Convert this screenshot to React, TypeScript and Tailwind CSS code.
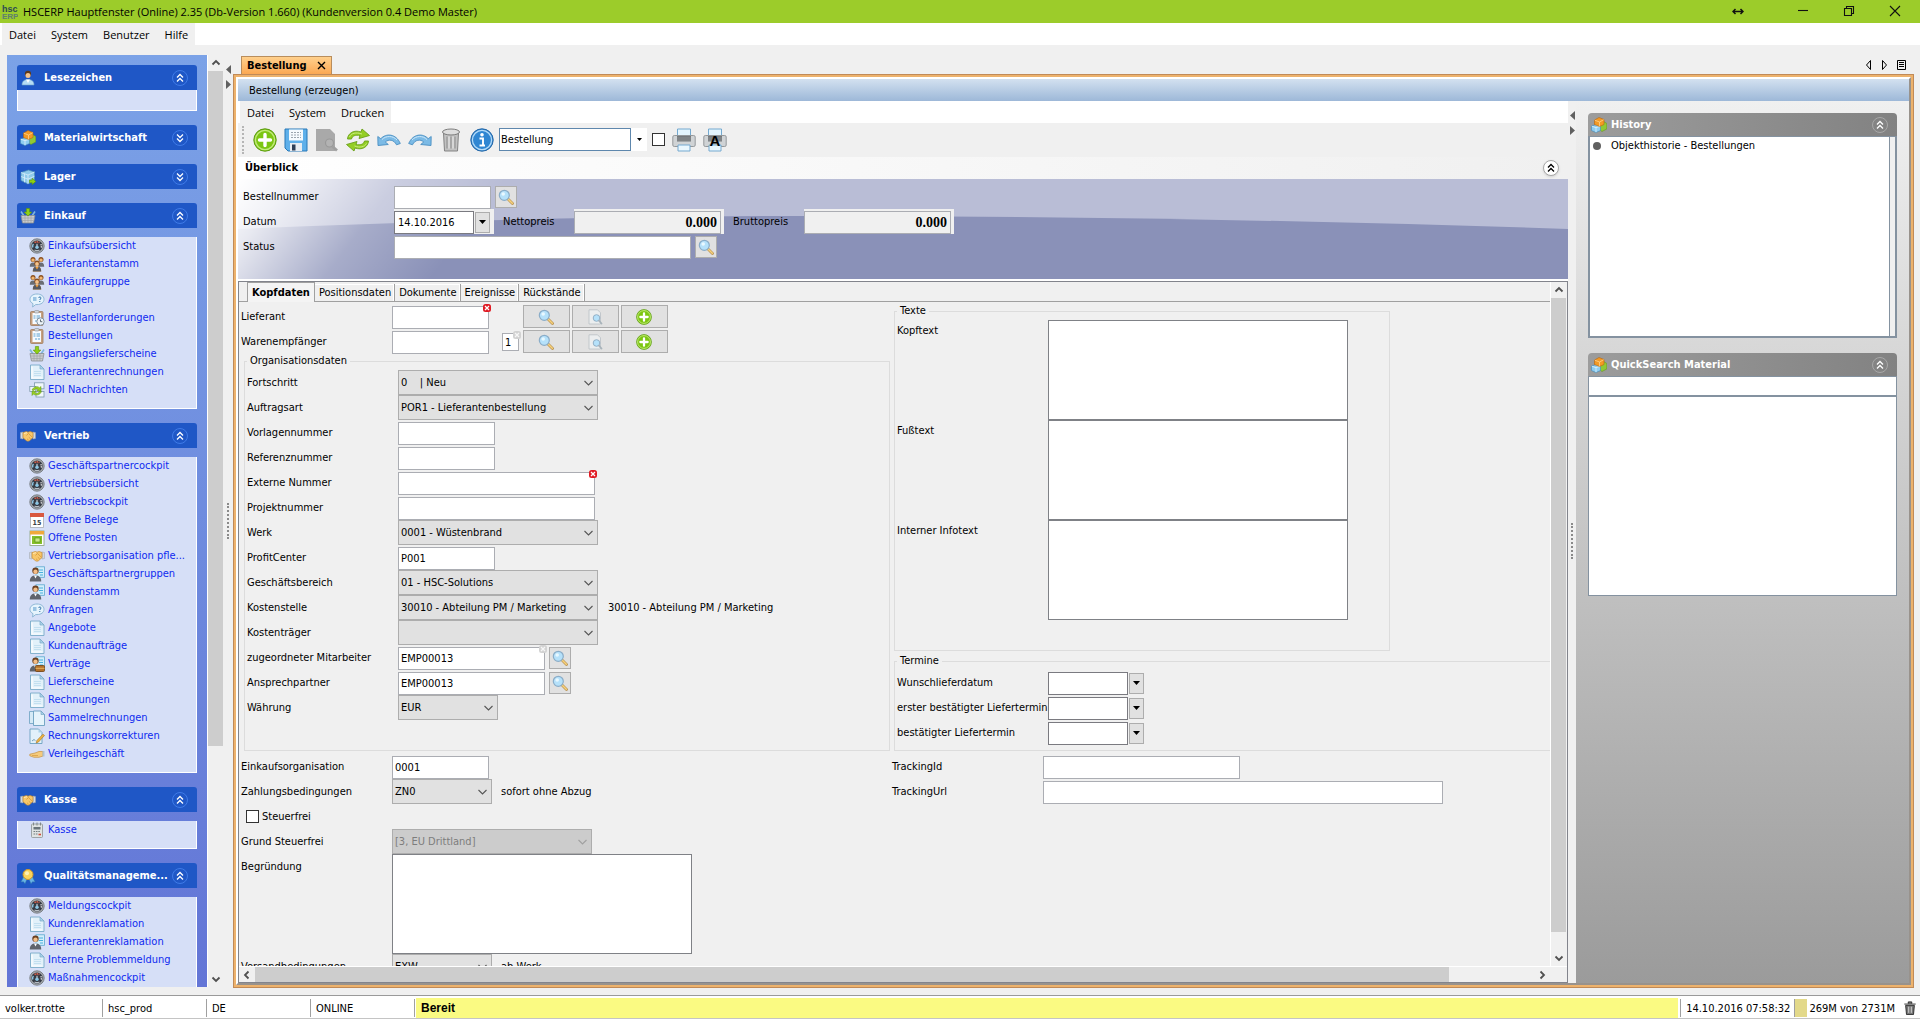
import React from "react";

/* ---------- small drawings ---------- */

type IconProps = { size?: number };

const Svg = ({ size = 16, children, box = 16 }: { size?: number; box?: number; children: React.ReactNode }) => (
  <svg width={size} height={size} viewBox={`0 0 ${box} ${box}`} className="block shrink-0" aria-hidden="true">
    {children}
  </svg>
);

const Gauge = () => (
  <Svg>
    <circle cx="8" cy="8" r="7.2" fill="#a4a8ad" stroke="#74797f" strokeWidth="0.9" />
    <circle cx="8" cy="8" r="5.6" fill="#363b44" />
    <path d="M3.8 9.500a4.200 4.200 0 0 1 .6-3.600" stroke="#8fc4e2" strokeWidth="1.400" fill="none" />
    <path d="M5.600 4.700a4 4 0 0 1 4.800 0" stroke="#e0604a" strokeWidth="1.600" fill="none" strokeDasharray="1.400 0.700" />
    <path d="M12.200 9.500a4.200 4.200 0 0 0-.6-3.600" stroke="#f2f2f2" strokeWidth="1.400" fill="none" strokeDasharray="1.200 0.800" />
    <path d="M5.500 12a5 5 0 0 0 5 0" stroke="#b9bfc6" strokeWidth="1.200" fill="none" />
    <path d="M8 9.500V5.800" stroke="#fff" strokeWidth="0.900" />
    <circle cx="8" cy="9.300" r="1.700" fill="#8cc6e4" />
  </Svg>
);

const People = () => (
  <Svg>
    <circle cx="4" cy="3.400" r="2.500" fill="#8a4f20" />
    <circle cx="12" cy="3.400" r="2.500" fill="#8a4f20" />
    <circle cx="4" cy="4.100" r="1.700" fill="#f3b870" />
    <circle cx="12" cy="4.100" r="1.700" fill="#f3b870" />
    <path d="M.8 10.800c0-3 1.200-4.300 3.200-4.300s3 1.300 3 4.300zM9 10.800c0-3 1-4.300 3-4.300s3.200 1.300 3.200 4.300z" fill="#6a6d74" />
    <circle cx="8" cy="7.200" r="2.700" fill="#8a4f20" />
    <circle cx="8" cy="8" r="1.900" fill="#f5c48c" />
    <path d="M3.800 15.500c0-3.600 1.600-5 4.200-5s4.200 1.400 4.200 5z" fill="#ec9a38" />
    <path d="M3.800 15.500c0-2.600 1-4.200 2.400-4.700L8 13.500l1.800-2.700c1.400.5 2.400 2.100 2.400 4.700z" fill="#555962" />
  </Svg>
);

const Speech = () => (
  <Svg>
    <path d="M8 2C3.900 2 1 4.200 1 7.300c0 2 1.200 3.500 3 4.400L3.600 15l3.200-2.500c.4 0 .8.1 1.200.1 4.100 0 7-2.200 7-5.300S12.100 2 8 2z" fill="#e6f4fd" stroke="#8fb8d6" />
    <path d="M4 6h3.500M4 8h3.500" stroke="#4c93c8" />
    <path d="M9.600 6c.2-1.400 2.600-1.200 2.400.1-.1.800-1.200.9-1.200 1.900M10.800 9v1" stroke="#2a6ea6" fill="none" />
  </Svg>
);

const Clipboard = ({ clock = false }: { clock?: boolean }) => (
  <Svg>
    <rect x="1.500" y="1.500" width="12.500" height="14" rx="1" fill="#c69f7e" stroke="#a07d60" strokeWidth=".8" />
    <rect x="3.500" y="3" width="8.500" height="11" fill="#f7fbff" />
    <rect x="5.500" y=".5" width="4.500" height="2.500" rx="1" fill="#d3d6da" stroke="#8b9096" strokeWidth=".6" />
    <path d="M4.500 6h2M7.500 6h3.500M4.500 8h2M7.500 8h3.500M6 11h2.200M9 11h2" stroke="#5aa0cf" />
    {clock && (
      <>
        <circle cx="11.500" cy="11.500" r="3.700" fill="#eef4f8" stroke="#8293a1" />
        <path d="M11.500 9.500v2.200h1.800" stroke="#4b5a66" fill="none" strokeWidth=".9" />
      </>
    )}
  </Svg>
);

const Basket = () => (
  <Svg>
    <path d="M1 3.500 4 8M15 3.500 12 8" stroke="#7fb6dc" strokeWidth="1.600" />
    <path d="M1 7.500h14l-1.500 7.500h-11z" fill="#c9cbcd" stroke="#8a8d91" strokeWidth=".8" />
    <path d="M2 10h12M2.500 12.500h11M5 8v7M8 8v7M11 8v7" stroke="#9c9fa3" strokeWidth=".6" />
    <path d="M6.400.5h3.200v3.600h2.200L8 8 4.200 4.100h2.200z" fill="#8fd016" stroke="#5e9409" strokeWidth=".6" />
  </Svg>
);

const Doc = () => (
  <Svg>
    <path d="M1.500 1h9.500l4 4v10.500h-13.500z" fill="#e2f1fa" stroke="#7aabc8" strokeWidth=".9" />
    <path d="M3 2.500v11.500h10.500" stroke="#fff" strokeWidth="1.200" fill="none" />
    <path d="M11 1v4h4z" fill="#a9d2e8" stroke="#7aabc8" strokeWidth=".7" />
    <path d="M5 7.500h7M5 9.500h7M5 11.500h7" stroke="#c3e0f0" />
  </Svg>
);

const Docs = () => (
  <Svg>
    <path d="M.5 1.500h9v12h-9z" fill="#d5eaf6" stroke="#6ba0c0" strokeWidth=".8" />
    <path d="M4.500 1h7.500l3.500 3.500v11h-11z" fill="#e6f4fb" stroke="#6ba0c0" strokeWidth=".9" />
    <path d="M12 1v3.500h3.500z" fill="#a9d2e8" stroke="#6ba0c0" strokeWidth=".6" />
  </Svg>
);

const DocEdit = () => (
  <Svg>
    <path d="M1 1h8.500l3.500 3.500v11h-12z" fill="#e2f1fa" stroke="#6ba0c0" strokeWidth=".9" />
    <path d="M9.500 1v3.500h3.500z" fill="#a9d2e8" />
    <path d="m15.500 7.500-6 6.500-2.300 1 .7-2.500 6-6.300z" fill="#eeb53f" stroke="#a5702a" strokeWidth=".6" />
    <path d="m3 13 2-1.500 1.500 1.200" stroke="#5b88a5" fill="none" strokeWidth=".8" />
  </Svg>
);

const Edi = () => (
  <Svg>
    <rect x="5.500" y=".8" width="9.500" height="6" fill="#f1f7fb" stroke="#7c98ad" strokeWidth=".8" />
    <rect x=".8" y="4.500" width="6" height="5" fill="#f1f7fb" stroke="#7c98ad" strokeWidth=".8" />
    <rect x="7" y="9.500" width="8" height="5.500" fill="#f1f7fb" stroke="#7c98ad" strokeWidth=".8" />
    <path d="M3 8c2-4 6-4 7.500-2.200L12 4.500V9H7.800l1.300-1.500C7.800 6.500 5.500 6.800 4.500 8.500zM12.500 9.500c-1.500 4-6 4.300-8 2.500L3 13.500V9.200h4l-1.200 1.500c1.500 1 3.700.7 4.700-1.200z" fill="#9bd024" stroke="#5d9410" strokeWidth=".5" />
  </Svg>
);

const CalendarRed = () => (
  <Svg>
    <rect x="1.500" y="1.500" width="13" height="14" fill="#fff" stroke="#a9adb3" strokeWidth=".8" />
    <rect x="1" y="1" width="14" height="4" fill="#d9583f" />
    <text x="8" y="12.500" textAnchor="middle" fontSize="7" fontWeight="700" fontFamily="DejaVu Sans Condensed" fill="#3a3f45">15</text>
  </Svg>
);

const CalendarGreen = () => (
  <Svg>
    <rect x="1" y="1" width="14" height="14.500" fill="#fff" stroke="#8aa17c" strokeWidth=".8" />
    <rect x="1" y="1" width="14" height="3.500" fill="#f0a93c" />
    <rect x="3" y="6" width="10" height="8" fill="#86bf2a" />
    <rect x="6" y="8" width="5" height="4" fill="#c8ea86" stroke="#4f8410" strokeWidth=".6" />
  </Svg>
);

const Handshake = () => (
  <Svg>
    <path d="M.5 4.500 3 4v7l-2.500-.5zM15.500 4.500 13 4v7l2.500-.5z" fill="#d3d8de" stroke="#9aa0a8" strokeWidth=".5" />
    <path d="M3 4.500 6.500 3.500 8 4.200l2-.7 3 1v5l-3.500 3.200c-1 .6-2 .6-3 0L3 9.800z" fill="#f8c76a" stroke="#c48a30" strokeWidth=".7" />
    <path d="M6.500 7.500 8.500 5.500l3.800 3.700M7 10.800l1.600 1.200M8.800 9.300l1.900 1.500" stroke="#cf9038" strokeWidth=".7" fill="none" />
    <path d="M4 5.500 7 4.700" stroke="#ffe8b5" />
  </Svg>
);

const PersonCard = ({ briefcase = false }: { briefcase?: boolean }) => (
  <Svg>
    <rect x="7" y=".8" width="8.500" height="10.500" fill="#d3eefb" stroke="#5ba7cf" strokeWidth=".8" />
    <path d="M10 4h4M10 6.500h4M11 9h3" stroke="#49b0dc" />
    <circle cx="6.500" cy="4.700" r="3.200" fill="#6b4020" />
    <circle cx="6.500" cy="5.800" r="2.200" fill="#f3bd86" />
    <path d="M.8 15.500c0-4.200 2.200-6 5.700-6s5.700 1.800 5.700 6z" fill="#60646c" />
    <path d="m5 9.500 1.500 3 1.500-3z" fill="#fff" />
    {briefcase && <rect x="6.500" y="9.500" width="9" height="6" rx="1" fill="#b3702a" stroke="#6e3f10" strokeWidth=".8" />}
    {briefcase && <path d="M6.500 12.300h9" stroke="#e9b45c" />}
  </Svg>
);

const Hand = () => (
  <Svg>
    <path d="M.8 8.200 6 7l4-1.500h4v4.500l-4 1.300H5L.8 9.800z" fill="#f5cb7d" stroke="#c7923f" strokeWidth=".7" />
    <path d="M13.500 5h2v5.500h-2z" fill="#afc2d2" />
    <path d="M3 9.500h6" stroke="#cf9038" strokeWidth=".6" />
  </Svg>
);

const Calculator = () => (
  <Svg>
    <rect x="2.500" y="2" width="11" height="13.500" rx="1" fill="#dfe3e2" stroke="#8b9394" strokeWidth=".8" />
    <path d="M4.500.5v3M8 .5v3M11.500.5v3" stroke="#81898a" />
    <rect x="4.500" y="5" width="7" height="2.500" fill="#6a757b" />
    <path d="M4.500 9.500h7M4.500 12h4" stroke="#737c80" strokeDasharray="1.600 .8" />
    <path d="M9.500 12.500H12" stroke="#d34a3a" strokeWidth="1.600" />
  </Svg>
);

const UserIcon = () => (
  <Svg>
    <path d="M2 15c0-4 2.500-5.500 6-5.500s6 1.500 6 5.500z" fill="#b5dcf4" stroke="#6da3ca" strokeWidth=".6" />
    <path d="m6 9.500 2 3.500 2-3.500z" fill="#fff" />
    <circle cx="8" cy="3.900" r="3.100" fill="#5e3a1c" />
    <circle cx="8" cy="5.400" r="2.500" fill="#f4c48f" />
  </Svg>
);

const Cubes = () => (
  <Svg>
    <path d="m8.500 6.500 5-1.500 2.300 1.500v5.500L11 14.500l-3-2z" fill="#8fc936" stroke="#5e9312" strokeWidth=".5" />
    <path d="m.5 9 5-1.500L9.500 9v4.500L5 15.500.5 13.500z" fill="#8fcdf0" stroke="#3f88b9" strokeWidth=".6" />
    <path d="m.8 9.200 4.200 1.500 4.300-1.500M5 10.700v4.500" stroke="#dff2fc" strokeWidth=".8" fill="none" />
    <path d="m3.500 3 4.500-2.500 5 2v5L8.500 9.500l-5-2z" fill="#f39a25" stroke="#b8650d" strokeWidth=".6" />
    <path d="m3.800 3.200 4.700 1.800 4.200-2.300M8.500 5v4.300" stroke="#ffd28a" strokeWidth=".8" fill="none" />
  </Svg>
);

const Box = () => (
  <Svg>
    <path d="M1 3.500 8.500 1l6 2v8L8 15 1 11.500z" fill="#8fcbea" stroke="#4a8cb5" strokeWidth=".7" />
    <path d="m1 3.500 7 2.500 6.500-3M8 6v9M4.500 4.800v8.500M1 7.500l7 2.700 6.500-3" stroke="#e2f4fd" strokeWidth=".7" fill="none" />
    <path d="M9.500 11h2.700V9.200l3.600 3.200-3.600 3.200v-1.800H9.500z" fill="#8fd016" stroke="#5e9409" strokeWidth=".6" />
  </Svg>
);

const Medal = () => (
  <Svg>
    <path d="m3.500 9-2.500 5 2.500-.3 1.500 2 2-4.500zM12.500 9l2.500 5-2.500-.3-1.500 2-2-4.500z" fill="#69b3e4" stroke="#2f78ac" strokeWidth=".5" />
    <circle cx="8" cy="6.500" r="5" fill="#fbd35b" stroke="#d2982a" />
    <circle cx="7" cy="5.300" r="2" fill="#fff0b5" />
  </Svg>
);

const PlusGreen = ({ size = 16 }: IconProps) => (
  <Svg size={size} box={24}>
    <circle cx="12" cy="12" r="11.200" fill="#7cc611" stroke="#5c9a14" />
    <circle cx="12" cy="12" r="9.600" fill="none" stroke="#c2ea7c" strokeWidth="1.400" />
    <path d="M12 6.500v11M6.500 12h11" stroke="#fff" strokeWidth="3.400" strokeLinecap="round" />
  </Svg>
);

const Save = () => (
  <Svg size={24} box={24}>
    <path d="M1 1h22v22H4l-3-3z" fill="#5fb0ea" stroke="#2878b8" />
    <rect x="5" y="1.500" width="14" height="11" fill="#f5fafe" />
    <path d="M7 4.500h10M7 7h10M7 9.500h10" stroke="#9aa4ae" strokeDasharray="2 1" />
    <rect x="6" y="15" width="12" height="8" fill="#e8edf2" />
    <rect x="8" y="16.500" width="3.500" height="6" fill="#2d3f57" />
  </Svg>
);

const SearchDocGray = () => (
  <Svg size={24} box={24}>
    <path d="M1 1h14l5 5v17H1z" fill="#a9a9a9" />
    <circle cx="14.500" cy="15" r="4" fill="#b3b3b3" stroke="#999" strokeWidth="1.200" />
    <path d="m17.500 18.500 4.500 4" stroke="#9f9f9f" strokeWidth="2.800" />
  </Svg>
);

const Refresh = () => (
  <Svg size={24} box={24}>
    <path d="M1.500 11C2 5 8 1.500 15 4l1-3 7.500 6.500L13 10.500l1-3C9.500 6.500 6 8 5.500 11z" fill="#94ce24" stroke="#6aa01a" strokeWidth=".9" />
    <path d="M22.500 13c-.5 6-6.500 9.500-13.500 7l-1 3L.5 16.500 11 13.500l-1 3c4.500 1 8-.5 8.500-3.500z" fill="#94ce24" stroke="#6aa01a" strokeWidth=".9" />
    <path d="M3.500 9C5 5 10 4 16 6M20.500 15.500c-2 3.500-6.500 4.500-12 2.500" stroke="#c9ec83" fill="none" />
  </Svg>
);

const Undo = ({ flip = false }: { flip?: boolean }) => (
  <Svg size={24} box={24}>
    <g transform={flip ? "matrix(-1 0 0 1 24 0)" : undefined}>
      <path d="m.8 8.500 3 2.200C9 5 19 5.500 23.300 15.500l-3.800 1.300C17 11.500 11.500 11 8.300 14l3 2.500L1 17.500z" fill="#7cbbe6" stroke="#4a8fc2" strokeWidth=".9" />
      <path d="M5 11.500c4-4 11-4 15 .5" stroke="#cfe8f9" fill="none" />
    </g>
  </Svg>
);

const TrashIcon = () => (
  <Svg size={24} box={24}>
    <path d="M4.500 5h15l-1 18h-13z" fill="#c2c2c2" stroke="#838383" />
    <ellipse cx="12" cy="4" rx="8.500" ry="3" fill="#dedede" stroke="#7c7c7c" />
    <path d="M8 8.500v12M12 8.500v12M16 8.500v12" stroke="#989898" strokeWidth="1.300" />
    <path d="M10 8.500v12M14 8.500v12" stroke="#ececec" strokeWidth="1" />
  </Svg>
);

const Info = () => (
  <Svg size={24} box={24}>
    <circle cx="12" cy="12" r="11.200" fill="#2f86d2" stroke="#2767a5" />
    <circle cx="12" cy="12" r="9.600" fill="none" stroke="#b4dbf8" strokeWidth="1.300" />
    <circle cx="12" cy="6.800" r="1.800" fill="#fff" />
    <path d="M9.500 10.500h3.500v7M9.500 17.500h5.500" stroke="#fff" strokeWidth="1.900" fill="none" />
  </Svg>
);

const Printer = ({ letter = false }: { letter?: boolean }) => (
  <Svg size={24} box={24}>
    <path d="M5.500 1h13v8h-13z" fill="#e3f4fd" stroke="#74a9d0" />
    <rect x=".8" y="7.500" width="22.400" height="11" rx="1.500" fill="#d0d3d5" stroke="#94989b" />
    <path d="M5 8h14v5.500H5z" fill="#74787c" />
    <path d="M5 10h14M5 12h14" stroke="#95999c" strokeWidth=".7" />
    <path d="M6 17h12v6H6z" fill="#eaf7fe" stroke="#74a9d0" />
    {letter && <text x="12" y="18" textAnchor="middle" fontSize="15" fontWeight="700" fontFamily="Liberation Sans" fill="#000">A</text>}
  </Svg>
);

const Magnifier = () => (
  <Svg>
    <path d="m10 10 4.500 4.500" stroke="#b8914f" strokeWidth="2.800" strokeLinecap="round" />
    <path d="m10.300 10.300 4 4" stroke="#f7d27c" strokeWidth="1.600" strokeLinecap="round" />
    <circle cx="6.300" cy="6.300" r="5" fill="#b5e1fa" stroke="#8badc8" strokeWidth="1.200" />
    <circle cx="5.200" cy="5" r="1.800" fill="#e8f8ff" />
  </Svg>
);

const DocMagnifier = () => (
  <Svg>
    <path d="M2 .8h8.500l3 3V15H2z" fill="#eceeef" stroke="#b9bfc4" strokeWidth=".8" />
    <circle cx="9.500" cy="9" r="3.300" fill="#b5e1fa" stroke="#93b0c6" />
    <path d="m12 11.700 2.500 2.800" stroke="#a8b3ba" strokeWidth="1.800" strokeLinecap="round" />
  </Svg>
);

const DoubleChevron = ({ down = false, stroke = "#fff" }: { down?: boolean; stroke?: string }) => (
  <svg width="10" height="10" viewBox="0 0 10 10" className={down ? "block rotate-180" : "block"} aria-hidden="true">
    <path d="M2 4.500 5 1.500l3 3M2 8.500l3-3 3 3" fill="none" stroke={stroke} strokeWidth="1.300" />
  </svg>
);

const Chevron = ({ dir }: { dir: "up" | "down" | "left" | "right" }) => {
  const d = {
    up: "M1.500 6.500 5 3l3.500 3.500",
    down: "M1.500 3.500 5 7l3.500-3.500",
    left: "M6.500 1.500 3 5l3.500 3.500",
    right: "M3.500 1.500 7 5 3.500 8.500",
  }[dir];
  return (
    <svg width="10" height="10" viewBox="0 0 10 10" className="block" aria-hidden="true">
      <path d={d} fill="none" stroke="currentColor" strokeWidth="1.800" />
    </svg>
  );
};

const Triangle = ({ dir, className = "" }: { dir: "left" | "right" | "down"; className?: string }) => {
  const d = { left: "M5 0v9L0 4.500z", right: "M0 0v9l5-4.500z", down: "M0 2h7L3.500 6z" }[dir];
  return (
    <svg width={dir === "down" ? 7 : 5} height="9" viewBox={dir === "down" ? "0 0 7 9" : "0 0 5 9"} className={`block ${className}`} aria-hidden="true">
      <path d={d} fill="currentColor" />
    </svg>
  );
};

const ErrorBadge = ({ muted = false }: { muted?: boolean }) => (
  <svg width="8" height="8" viewBox="0 0 8 8" className="absolute -top-0.5 -right-0.5 block" aria-hidden="true">
    <rect width="8" height="8" rx="2.500" fill={muted ? "#d2d2d2" : "#e01b24"} />
    <path d="m2 2 4 4M6 2 2 6" stroke={muted ? "#f6f6f6" : "#fff"} strokeWidth="1.300" />
  </svg>
);

/* ---------- sidebar ---------- */

type Item = [React.ReactNode, string];
type Group = { title: string; icon: React.ReactNode; items?: Item[] };

const groups: Group[] = [
  { title: "Lesezeichen", icon: <UserIcon />, items: [] },
  { title: "Materialwirtschaft", icon: <Cubes /> },
  { title: "Lager", icon: <Box /> },
  {
    title: "Einkauf",
    icon: <Basket />,
    items: [
      [<Gauge />, "Einkaufsübersicht"],
      [<People />, "Lieferantenstamm"],
      [<People />, "Einkäufergruppe"],
      [<Speech />, "Anfragen"],
      [<Clipboard clock />, "Bestellanforderungen"],
      [<Clipboard />, "Bestellungen"],
      [<Basket />, "Eingangslieferscheine"],
      [<Doc />, "Lieferantenrechnungen"],
      [<Edi />, "EDI Nachrichten"],
    ],
  },
  {
    title: "Vertrieb",
    icon: <Handshake />,
    items: [
      [<Gauge />, "Geschäftspartnercockpit"],
      [<Gauge />, "Vertriebsübersicht"],
      [<Gauge />, "Vertriebscockpit"],
      [<CalendarRed />, "Offene Belege"],
      [<CalendarGreen />, "Offene Posten"],
      [<Handshake />, "Vertriebsorganisation pfle..."],
      [<PersonCard />, "Geschäftspartnergruppen"],
      [<PersonCard />, "Kundenstamm"],
      [<Speech />, "Anfragen"],
      [<Doc />, "Angebote"],
      [<Doc />, "Kundenaufträge"],
      [<PersonCard briefcase />, "Verträge"],
      [<Doc />, "Lieferscheine"],
      [<Doc />, "Rechnungen"],
      [<Docs />, "Sammelrechnungen"],
      [<DocEdit />, "Rechnungskorrekturen"],
      [<Hand />, "Verleihgeschäft"],
    ],
  },
  { title: "Kasse", icon: <Handshake />, items: [[<Calculator />, "Kasse"]] },
  {
    title: "Qualitätsmanageme...",
    icon: <Medal />,
    items: [
      [<Gauge />, "Meldungscockpit"],
      [<Doc />, "Kundenreklamation"],
      [<PersonCard />, "Lieferantenreklamation"],
      [<Doc />, "Interne Problemmeldung"],
      [<Gauge />, "Maßnahmencockpit"],
    ],
  },
];

const Sidebar = () => (
  <nav className="flex w-[200px] shrink-0 flex-col gap-3.5 overflow-hidden bg-linear-to-b from-[#7ba2e7] to-[#6375d6] px-2.5 pt-2.5">
    {groups.map((g) => (
      <section key={g.title} className="shrink-0">
        <header className="flex h-[25px] items-center rounded-t-[3px] bg-[#1f57c6] pr-[9px] pl-[3px] font-bold text-white">
          {g.icon}
          <h2 className="ml-2 flex-1 whitespace-nowrap">{g.title}</h2>
          <button aria-label={g.title} className="flex size-4 shrink-0 items-center justify-center rounded-full border border-[#3f7be8]">
            <DoubleChevron down={!g.items} />
          </button>
        </header>
        {g.items && (
          <ul className="min-h-[21px] border border-t-0 border-white bg-[#d6dff7] pl-[11px]">
            {g.items.map(([icon, label], i) => (
              <li key={label} className={i === 0 ? "mt-[9px] last:mb-[9px]" : "last:mb-[9px]"}>
                <a href="#" className="flex h-[18px] items-center gap-[3px] whitespace-nowrap text-[#0f2af0]">
                  {icon}
                  {label}
                </a>
              </li>
            ))}
          </ul>
        )}
      </section>
    ))}
  </nav>
);

const ScrollButton = ({ dir }: { dir: "up" | "down" | "left" | "right" }) => (
  <button aria-label={`Scroll ${dir}`} className="flex size-4 shrink-0 items-center justify-center text-[#505050]">
    <Chevron dir={dir} />
  </button>
);

const Splitter = () => (
  <div className="flex w-2 shrink-0 flex-col items-center text-[#606060]">
    <Triangle dir="left" className="mt-2.5" />
    <Triangle dir="right" className="mt-1.5" />
    <div className="flex flex-1 flex-col items-center justify-center pb-9">
      <div className="h-9 border-l-2 border-dotted border-[#8a8a8a]" />
    </div>
  </div>
);

/* ---------- form parts ---------- */

const inputBase = "border border-[#abadb3] bg-white px-0.5 text-black outline-none";

const Row = ({ id, label, children }: { id: string; label: string; children?: React.ReactNode }) => (
  <div className="flex h-[25px] items-end">
    <label htmlFor={id} className="w-[151px] shrink-0 leading-[25px] whitespace-nowrap">
      {label}
    </label>
    {children}
  </div>
);

const Text = ({ id, w, value = "", badge }: { id: string; w: string; value?: string; badge?: "error" | "muted" }) => (
  <span className={`relative h-[23px] shrink-0 ${w}`}>
    <input id={id} defaultValue={value} className={`h-full w-full ${inputBase}`} />
    {badge && <ErrorBadge muted={badge === "muted"} />}
  </span>
);

const Select = ({ id, w, value, disabled = false }: { id: string; w: string; value: string; disabled?: boolean }) => (
  <span className={`relative h-[25px] shrink-0 ${w} ${disabled ? "text-[#7d7d7d]" : "text-black"}`}>
    <select
      id={id}
      disabled={disabled}
      className={`h-full w-full appearance-none rounded-none border border-[#adadad] px-0.5 outline-none ${disabled ? "bg-[#cccccc]" : "bg-[#e1e1e1]"}`}
    >
      <option>{value}</option>
    </select>
    <svg width="9" height="6" viewBox="0 0 9 6" className="pointer-events-none absolute top-2.5 right-[5px]" aria-hidden="true">
      <path d="m.5 1 4 4 4-4" fill="none" stroke={disabled ? "#a0a0a0" : "#555"} strokeWidth="1.100" />
    </svg>
  </span>
);

const LookupButton = ({ label }: { label: string }) => (
  <button aria-label={label} className="mb-px ml-1 flex size-[22px] shrink-0 items-center justify-center self-end border border-[#adadad] bg-[#e1e1e1]">
    <Magnifier />
  </button>
);

const DateField = ({ id, value = "" }: { id: string; value?: string }) => (
  <span className="flex items-center">
    <input id={id} defaultValue={value} className="h-[23px] w-20 border border-[#7a7a80] bg-white px-[3px] outline-none" />
    <button aria-label="Kalender" className="ml-px flex h-[21px] w-[15px] items-center justify-center border border-[#adadad] bg-[#e1e1e1]">
      <Triangle dir="down" />
    </button>
  </span>
);

const ActionButtons = ({ name }: { name: string }) => (
  <span className="flex h-[25px] gap-0.5">
    {[<Magnifier />, <DocMagnifier />, <PlusGreen />].map((icon, i) => (
      <button key={i} aria-label={`${name} Aktion ${i + 1}`} className="mt-px flex h-[23px] w-[47px] items-center justify-center border border-[#adadad] bg-[#e1e1e1] pr-0.5">
        {icon}
      </button>
    ))}
  </span>
);

const legendCls = "px-[3px] leading-[14px]";

const LeftForm = () => (
  <div className="w-[651px] shrink-0">
    <Row id="lieferant" label="Lieferant">
      <Text id="lieferant" w="w-[97px]" badge="error" />
      <span className="w-[34px] shrink-0" />
      <ActionButtons name="Lieferant" />
    </Row>
    <Row id="warenempf" label="Warenempfänger">
      <Text id="warenempf" w="w-[97px]" />
      <span className="relative mb-[3px] ml-[13px] h-[18px] w-[17px] shrink-0">
        <input aria-label="Anzahl" defaultValue="1" className={`h-full w-full ${inputBase}`} />
        <ErrorBadge muted />
      </span>
      <span className="w-1 shrink-0" />
      <ActionButtons name="Warenempfänger" />
    </Row>

    <fieldset className="mb-[3px] ml-[3px] w-[646px] border border-[#dcdcdc] pt-0.5 pb-[30px] pl-0.5">
      <legend className={legendCls}>Organisationsdaten</legend>
      <Row id="fortschritt" label="Fortschritt">
        <Select id="fortschritt" w="w-[200px]" value={"0\u00a0\u00a0\u00a0\u00a0| Neu"} />
      </Row>
      <Row id="auftragsart" label="Auftragsart">
        <Select id="auftragsart" w="w-[200px]" value="POR1 - Lieferantenbestellung" />
      </Row>
      <Row id="vorlage" label="Vorlagennummer">
        <Text id="vorlage" w="w-[97px]" />
      </Row>
      <Row id="referenz" label="Referenznummer">
        <Text id="referenz" w="w-[97px]" />
      </Row>
      <Row id="extern" label="Externe Nummer">
        <Text id="extern" w="w-[197px]" badge="error" />
      </Row>
      <Row id="projekt" label="Projektnummer">
        <Text id="projekt" w="w-[197px]" />
      </Row>
      <Row id="werk" label="Werk">
        <Select id="werk" w="w-[200px]" value="0001 - Wüstenbrand" />
      </Row>
      <Row id="profit" label="ProfitCenter">
        <Text id="profit" w="w-[97px]" value="P001" />
      </Row>
      <Row id="bereich" label="Geschäftsbereich">
        <Select id="bereich" w="w-[200px]" value="01 - HSC-Solutions" />
      </Row>
      <Row id="kostenstelle" label="Kostenstelle">
        <Select id="kostenstelle" w="w-[200px]" value="30010 - Abteilung PM / Marketing" />
        <span className="ml-2.5 leading-[25px]">30010 - Abteilung PM / Marketing</span>
      </Row>
      <Row id="kostentraeger" label="Kostenträger">
        <Select id="kostentraeger" w="w-[200px]" value="" />
      </Row>
      <Row id="mitarbeiter" label="zugeordneter Mitarbeiter">
        <Text id="mitarbeiter" w="w-[147px]" value="EMP00013" badge="muted" />
        <LookupButton label="Mitarbeiter suchen" />
      </Row>
      <Row id="ansprech" label="Ansprechpartner">
        <Text id="ansprech" w="w-[147px]" value="EMP00013" />
        <LookupButton label="Ansprechpartner suchen" />
      </Row>
      <Row id="waehrung" label="Währung">
        <Select id="waehrung" w="w-[100px]" value="EUR" />
      </Row>
    </fieldset>

    <Row id="ekorg" label="Einkaufsorganisation">
      <Text id="ekorg" w="w-[97px]" value="0001" />
    </Row>
    <Row id="zahlung" label="Zahlungsbedingungen">
      <Select id="zahlung" w="w-[100px]" value="ZN0" />
      <span className="ml-[9px] leading-[25px]">sofort ohne Abzug</span>
    </Row>
    <label className="flex h-[25px] items-center gap-[3px] pl-[5px]">
      <input type="checkbox" className="size-[13px] appearance-none border border-[#333] bg-white" />
      Steuerfrei
    </label>
    <Row id="grund" label="Grund Steuerfrei">
      <Select id="grund" w="w-[200px]" value="[3, EU Drittland]" disabled />
    </Row>
    <div className="flex">
      <label htmlFor="begruendung" className="w-[151px] shrink-0 leading-[25px]">
        Begründung
      </label>
      <textarea id="begruendung" className="block h-[100px] w-[300px] resize-none border border-[#7f8186] bg-white outline-none" />
    </div>
    <Row id="versand" label="Versandbedingungen">
      <Select id="versand" w="w-[100px]" value="EXW" />
      <span className="ml-[9px] leading-[25px]">ab Werk</span>
    </Row>
  </div>
);

const RightForm = () => (
  <div className="min-w-0 flex-1">
    <fieldset className="mb-[3px] ml-0.5 w-[496px] border border-[#dcdcdc] pt-0.5 pb-[30px] pl-0.5">
      <legend className={legendCls}>Texte</legend>
      {[
        ["kopftext", "Kopftext"],
        ["fusstext", "Fußtext"],
        ["infotext", "Interner Infotext"],
      ].map(([id, label]) => (
        <div key={id} className="flex">
          <label htmlFor={id} className="w-[151px] shrink-0 leading-[22px]">
            {label}
          </label>
          <textarea id={id} className="block h-[100px] w-[300px] resize-none border border-[#7f8186] bg-white outline-none" />
        </div>
      ))}
    </fieldset>
    <fieldset className="mb-[3px] ml-0.5 border border-r-0 border-[#dcdcdc] pt-0.5 pb-[5px] pl-0.5">
      <legend className={legendCls}>Termine</legend>
      <Row id="wunsch" label="Wunschlieferdatum">
        <DateField id="wunsch" />
      </Row>
      <Row id="erster" label="erster bestätigter Liefertermin">
        <DateField id="erster" />
      </Row>
      <Row id="bestaetigt" label="bestätigter Liefertermin">
        <DateField id="bestaetigt" />
      </Row>
    </fieldset>
    <Row id="trackid" label="TrackingId">
      <Text id="trackid" w="w-[197px]" />
    </Row>
    <Row id="trackurl" label="TrackingUrl">
      <Text id="trackurl" w="w-[400px]" />
    </Row>
  </div>
);

const PriceField = ({ id, label }: { id: string; label: string }) => (
  <>
    <label htmlFor={id} className="w-[71px] shrink-0 leading-[25px]">
      {label}
    </label>
    <span className="flex h-[25px] w-[150px] shrink-0 bg-[#f0f0f0] pt-0.5 pr-[3px]">
      <input
        id={id}
        readOnly
        defaultValue="0.000"
        className="h-[23px] w-full border border-[#abadb3] bg-[#f0f0f0] pr-[3px] text-right font-['Liberation_Serif',serif] text-[14px] font-bold outline-none"
      />
    </span>
  </>
);

const Overview = () => (
  <section className="relative h-[102px] shrink-0 border-b-2 border-white bg-[#b9bdd6]">
    <svg className="absolute inset-0 h-full w-full" viewBox="0 0 1330 100" preserveAspectRatio="none" aria-hidden="true">
      <defs>
        <linearGradient id="sheen" gradientUnits="userSpaceOnUse" x1="0" y1="0" x2="170" y2="130">
          <stop offset="0" stopColor="#fff" stopOpacity="1" />
          <stop offset="0.2" stopColor="#fff" stopOpacity="0.8" />
          <stop offset="0.6" stopColor="#fff" stopOpacity="0.25" />
          <stop offset="1" stopColor="#fff" stopOpacity="0" />
        </linearGradient>
      </defs>
      <path d="M0 50Q300 37 560 37Q950 37 1330 50V100H0z" fill="#8a91b8" />
      <rect width="420" height="100" fill="url(#sheen)" />
    </svg>
    <div className="relative pt-[5px] pl-[5px]">
      <Row id="bestellnr" label="Bestellnummer">
        <Text id="bestellnr" w="w-[97px]" />
        <LookupButton label="Bestellung suchen" />
      </Row>
      <div className="flex h-[25px] items-end">
        <label htmlFor="datum" className="w-[151px] shrink-0 leading-[25px]">
          Datum
        </label>
        <span className="mr-[9px] flex h-[25px] w-[100px] items-end bg-[#f0f0f0]">
          <DateField id="datum" value="14.10.2016" />
        </span>
        <PriceField id="netto" label="Nettopreis" />
        <span className="w-[9px] shrink-0" />
        <PriceField id="brutto" label="Bruttopreis" />
      </div>
      <Row id="status" label="Status">
        <Text id="status" w="w-[297px]" />
        <LookupButton label="Status suchen" />
      </Row>
    </div>
  </section>
);

/* ---------- toolbar ---------- */

const tools: [string, React.ReactNode][] = [
  ["Neu", <PlusGreen size={24} />],
  ["Speichern", <Save />],
  ["Vorschau", <SearchDocGray />],
  ["Aktualisieren", <Refresh />],
  ["Rückgängig", <Undo />],
  ["Wiederholen", <Undo flip />],
  ["Löschen", <TrashIcon />],
  ["Info", <Info />],
];

const Toolbar = () => (
  <div className="flex h-[34px] shrink-0 items-center pb-px pl-1">
    <div className="mr-[9px] h-7 border-l-2 border-dotted border-[#b5b5b5]" />
    <div className="flex gap-[7px]">
      {tools.map(([name, icon]) => (
        <button key={name} aria-label={name}>
          {icon}
        </button>
      ))}
    </div>
    <input aria-label="Drucklayout" defaultValue="Bestellung" className="ml-[5px] h-[23px] w-[132px] border border-[#5e87ad] bg-white px-px outline-none" />
    <button aria-label="Layout wählen" className="flex h-[23px] w-4 items-center justify-center bg-white">
      <svg width="5" height="3" viewBox="0 0 5 3" aria-hidden="true">
        <path d="M0 0h5L2.500 3z" fill="#000" />
      </svg>
    </button>
    <input type="checkbox" aria-label="Direktdruck" className="ml-[5px] size-[13px] appearance-none border border-[#333] bg-white" />
    <button aria-label="Drucken" className="ml-[7px]">
      <Printer />
    </button>
    <button aria-label="Automatisch drucken" className="ml-[7px]">
      <Printer letter />
    </button>
  </div>
);

/* ---------- right-hand panels ---------- */

const PanelHeader = ({ title }: { title: string }) => (
  <header className="flex h-[23px] items-center rounded-t bg-linear-to-r from-[#9c9c9c] to-[#828282] pr-[9px] pl-[3px] font-bold text-white">
    <Cubes />
    <h2 className="ml-1 flex-1">{title}</h2>
    <button aria-label={title} className="flex size-4 items-center justify-center rounded-full border border-[#a8a8a8]">
      <DoubleChevron />
    </button>
  </header>
);

const RightPanels = () => (
  <aside className="flex w-[333px] shrink-0 flex-col gap-[15px] bg-linear-to-b from-[#f0f0f0] to-[#9b9b9b] px-3 pt-3">
    <section>
      <PanelHeader title="History" />
      <div className="flex h-[202px] border-2 border-t border-[#8492a0] bg-[#f0f0f0]">
        <ul className="mr-[5px] flex-1 border-r border-[#8492a0] bg-white pt-px">
          <li className="flex h-4 items-center pl-[3px]">
            <span className="mr-2.5 size-2 rounded-full bg-[#606060]" />
            Objekthistorie - Bestellungen
          </li>
        </ul>
      </div>
    </section>
    <section>
      <PanelHeader title="QuickSearch Material" />
      <input aria-label="Material suchen" className="block h-5 w-full border border-[#8492a0] bg-white px-1 outline-none" />
      <div className="h-[200px] border border-[#8492a0] bg-white" />
    </section>
  </aside>
);

/* ---------- page ---------- */

const tabs = ["Kopfdaten", "Positionsdaten", "Dokumente", "Ereignisse", "Rückstände"];
const uiFont = "font-['Open_Sans',sans-serif]";

const TitleBar = () => (
  <header className={`flex h-[23px] shrink-0 items-center bg-[#9ccc2a] pr-0.5 pl-0.5 ${uiFont}`}>
    <svg width="16" height="16" viewBox="0 0 16 16" aria-hidden="true">
      <text x="0" y="8" fontSize="9" fontWeight="700" fontFamily="Liberation Sans" fill="#2c4a52">hsc</text>
      <text x="0" y="15" fontSize="8" fontWeight="700" fontFamily="Liberation Sans" fill="#5d8070">ERP</text>
    </svg>
    <h1 className="ml-[5px] flex-1 whitespace-nowrap">HSCERP Hauptfenster (Online) 2.35 (Db-Version 1.660) (Kundenversion 0.4 Demo Master)</h1>
    <svg width="12" height="7" viewBox="0 0 12 7" className="mr-9" aria-hidden="true">
      <path d="M2 3.500h8M3.500 1 1 3.500 3.500 6M8.500 1 11 3.500 8.500 6" fill="none" stroke="#111" strokeWidth="1.500" />
    </svg>
    {[
      ["Minimieren", "M1 5.500h10"],
      ["Wiederherstellen", "M1.500 3.500h7v7h-7zM3.500 3.500v-2h7v7h-2"],
      ["Schließen", "m1 1 10 10M11 1 1 11"],
    ].map(([name, d]) => (
      <button key={name} aria-label={name} className="flex h-full w-[46px] items-center justify-center pb-0.5">
        <svg width="12" height="12" viewBox="0 0 12 12" aria-hidden="true">
          <path d={d} fill="none" stroke="#111" strokeWidth="1.100" />
        </svg>
      </button>
    ))}
  </header>
);

const StatusBar = () => (
  <footer className="flex h-6 shrink-0 border-t border-b border-t-[#9a9a9a] border-b-[#c4c4c4] bg-white pt-0.5 leading-5">
    {["volker.trotte", "hsc_prod", "DE", "ONLINE"].map((t) => (
      <div key={t} className="my-px w-[104px] shrink-0 border-r border-[#a0a0a0] pl-[5px] first:w-[103px]">
        {t}
      </div>
    ))}
    <div className="ml-px flex-1 bg-[#fafa82] pl-[5px] font-['Liberation_Sans',sans-serif] text-[12px] font-bold">Bereit</div>
    <div className="my-px ml-0.5 border-l border-[#a0a0a0] pr-1 pl-[5px]">14.10.2016 07:58:32</div>
    <div className="my-px flex border-l border-[#a0a0a0] pr-2">
      <span className="w-3 bg-[#e3d98a]" />
      <span className="ml-0.5">269M von 2731M</span>
    </div>
    <button aria-label="Speicher freigeben" className="mr-[3px] flex items-center">
      <Svg size={14}>
        <path d="M3 5h10l-1 10.500H4zM1.500 3.500h13M6 3V1h4v2" fill="#777" stroke="#222" />
        <path d="M6.500 6.500v7M9.500 6.500v7" stroke="#ddd" />
      </Svg>
    </button>
  </footer>
);

export default function App() {
  return (
    <div className="flex h-screen flex-col overflow-hidden bg-[#f0f0f0] font-['DejaVu_Sans_Condensed',Tahoma,sans-serif] text-[11px] leading-[14px] text-black">
      <TitleBar />
      <div className={`flex h-[22px] shrink-0 bg-white pl-0.5 ${uiFont}`}>
        <div className="flex gap-[15px] bg-[#f0f0f0] px-[7px] leading-6">
          {["Datei", "System", "Benutzer", "Hilfe"].map((m) => (
            <button key={m}>{m}</button>
          ))}
        </div>
      </div>

      <div className="flex min-h-0 flex-1 pr-1.5 pb-[7px] pl-[7px]">
        <div className="flex min-h-0 pt-2.5 pb-px">
          <Sidebar />
          <div className="flex w-[17px] flex-col border-l border-white">
            <ScrollButton dir="up" />
            <div className="w-[15px] flex-[3] bg-[#cdcdcd]" />
            <div className="flex-1" />
            <ScrollButton dir="down" />
          </div>
        </div>
        <div className="flex pt-2.5">
          <Splitter />
        </div>

        <main className="ml-px flex min-w-0 flex-1 flex-col pt-[11px]">
          <div className="flex h-[18px] shrink-0 items-center justify-between pl-2">
            <div className="flex h-full items-center gap-2.5 border border-b-0 border-[#b98d5c] bg-linear-to-b from-[#ffd08c] to-[#fba852] px-[5px] font-bold">
              <button>Bestellung</button>
              <button aria-label="Tab schließen">
                <svg width="9" height="9" viewBox="0 0 9 9" aria-hidden="true">
                  <path d="m1 1 7 7M8 1 1 8" stroke="#000" strokeWidth="1.400" />
                </svg>
              </button>
            </div>
            <div className="flex items-center gap-[11px] pr-2">
              <button aria-label="Vorheriger Tab">
                <svg width="6" height="10" viewBox="0 0 6 10" aria-hidden="true">
                  <path d="M5.500.5v9l-4-4.500z" fill="none" stroke="#000" />
                </svg>
              </button>
              <button aria-label="Nächster Tab">
                <svg width="6" height="10" viewBox="0 0 6 10" aria-hidden="true">
                  <path d="M.5.5v9l4-4.500z" fill="none" stroke="#000" />
                </svg>
              </button>
              <button aria-label="Tabliste" className="-ml-0.5">
                <svg width="9" height="10" viewBox="0 0 9 10" aria-hidden="true">
                  <path d="M.5.5h8v9h-8zM2 2.500h5M2 4.500h5M2 6.500h5" fill="none" stroke="#000" />
                </svg>
              </button>
            </div>
          </div>

          <div className="flex min-h-0 flex-1 flex-col border border-[#c08a58] bg-[#edb26c] p-0.5">
            <div className="flex min-h-0 flex-1 flex-col border-2 border-t-white border-r-[#98928c] border-b-[#98928c] border-l-white bg-[#f0f0f0]">
              <h2 className="h-[22px] shrink-0 bg-linear-to-b from-[#d3e1f0] to-[#9db8d8] pl-[11px] leading-[23px]">Bestellung (erzeugen)</h2>
              <div className="flex min-h-0 flex-1">
                <div className="flex min-w-0 flex-1 flex-col">
                  <div className={`flex h-[22px] shrink-0 bg-white pl-0.5 ${uiFont}`}>
                    <div className="flex gap-[15px] bg-[#f0f0f0] px-[7px] leading-6">
                      {["Datei", "System", "Drucken"].map((m) => (
                        <button key={m}>{m}</button>
                      ))}
                    </div>
                  </div>
                  <Toolbar />
                  <div className="flex h-[22px] shrink-0 items-center justify-between bg-linear-to-r from-white to-[#f0f0f0] pr-[9px] pl-[7px]">
                    <h3 className="font-bold">Überblick</h3>
                    <button aria-label="Überblick einklappen" className="flex size-4 items-center justify-center rounded-full border border-[#a8a8a8] bg-white shadow-sm">
                      <DoubleChevron stroke="#000" />
                    </button>
                  </div>
                  <Overview />

                  <div className="flex min-h-0 flex-1 flex-col border border-[#82848c]">
                    <div className="flex min-h-0 flex-1">
                      <div className="flex min-w-0 flex-1 flex-col overflow-hidden">
                        <div role="tablist" className="flex h-5 shrink-0 border-b border-[#a0a0a0] pl-2">
                          {tabs.map((t, i) => (
                            <button
                              key={t}
                              role="tab"
                              aria-selected={i === 0}
                              className={
                                i === 0
                                  ? "-mb-px h-5 border border-b-0 border-[#a0a0a0] bg-[#f4f4f4] px-1 font-bold"
                                  : "mt-0.5 h-[17px] border-r border-[#a0a0a0] pr-[3px] pl-1 shadow-[inset_-1px_1px_0_#fff]"
                              }
                            >
                              {t}
                            </button>
                          ))}
                        </div>
                        <div className="flex min-h-0 flex-1 overflow-hidden pt-0.5 pl-0.5">
                          <LeftForm />
                          <RightForm />
                        </div>
                      </div>
                      <div className="flex w-[17px] shrink-0 flex-col border-l border-white pr-px">
                        <ScrollButton dir="up" />
                        <div className="flex-1 bg-[#cdcdcd]" />
                        <div className="h-[18px]" />
                        <ScrollButton dir="down" />
                      </div>
                    </div>
                    <div className="flex h-4 shrink-0 border-t border-white pr-[17px]">
                      <ScrollButton dir="left" />
                      <div className="flex-[14] bg-[#cdcdcd]" />
                      <div className="flex-1" />
                      <ScrollButton dir="right" />
                    </div>
                  </div>
                </div>
                <Splitter />
                <RightPanels />
              </div>
            </div>
          </div>
        </main>
      </div>
      <StatusBar />
    </div>
  );
}
